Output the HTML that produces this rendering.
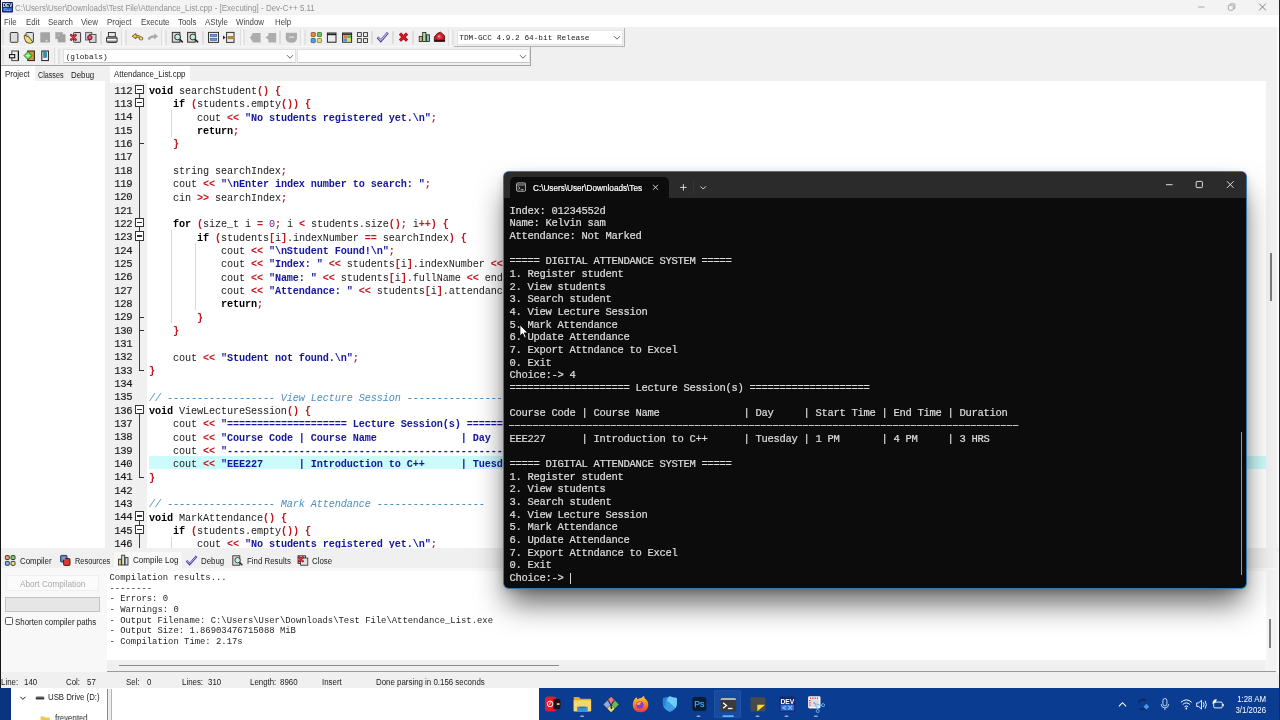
<!DOCTYPE html>
<html><head><meta charset="utf-8"><title>Dev-C++</title>
<style>
*{box-sizing:border-box;margin:0;padding:0}
html,body{width:1280px;height:720px;overflow:hidden;background:#fff}
body{position:relative;font-family:"Liberation Sans",sans-serif;font-size:8px;color:#000;line-height:1}
.abs{position:absolute}
#root{position:absolute;left:0;top:0;width:1280px;height:720px;will-change:transform}
.t{position:absolute;white-space:pre;line-height:10px;height:10px;transform-origin:0 0;transform:scaleX(.945)}
/* title + menu */
#title{left:0;top:0;width:1280px;height:14.5px;background:#f3f3f3}
#menu{left:0;top:14.5px;width:1280px;height:12.5px;background:#fff}
#tb{left:0;top:27px;width:1280px;height:39px;background:#f0f0f0}
#leftedge{left:0;top:15px;width:1.3px;height:705px;background:#1a1a1a}
.m{color:#444;font-size:8.35px;top:17.1px}
.sep{position:absolute;width:1px;background:#c9c9c9;transform:translateX(-0.5px)}
.combo{position:absolute;background:#fff;border:1px solid #dcdcdc;height:14px}
.mono{font-family:"Liberation Mono",monospace}
/* editor */
#edwrap{left:107px;top:66px;width:1173px;height:486px;background:#fff}
#gutter{left:110px;top:83px;width:37.2px;height:468px;background:#f0f0f0}
.ln{position:absolute;left:114.3px;font-family:"Liberation Mono",monospace;font-size:10.6px;letter-spacing:-0.36px;color:#1c1c1c;-webkit-text-stroke:0.18px #1c1c1c;white-space:pre;height:13.333px;line-height:13.333px}
.cl{position:absolute;left:149px;font-family:"Liberation Mono",monospace;font-size:10.2px;letter-spacing:-0.12px;color:#1a1a1a;white-space:pre;height:13.333px;line-height:13.333px}
.cl b{font-weight:bold}
.k{font-weight:bold;color:#000}
.s{font-weight:bold;color:#1515a0}
.o{font-weight:bold;color:#c0181f}
.n{color:#7a1a8a}
.c{font-style:italic;color:#4a8fc4}
.fb{position:absolute;left:135.2px;width:8.7px;height:9.4px;border:1.1px solid #333;background:#fff}
.fb i{position:absolute;left:0.7px;right:0.7px;top:3.05px;height:1.1px;background:#333}
.fv{position:absolute;left:139.1px;width:1.1px;background:#3c3c3c}
.fh{position:absolute;left:139.1px;width:4.6px;height:1.1px;background:#333}
.ig{position:absolute;width:1px;background:#d9d9d9}
/* terminal */
#term{left:504px;top:171.6px;width:741.7px;height:416.2px;background:#0c0c0c;border-radius:5px;box-shadow:0 0 0 1px #3876b4,0 18px 30px -3px rgba(0,0,0,.62),0 2px 8px rgba(0,0,0,.2);overflow:hidden}
#termbar{left:0;top:0;width:742px;height:26.2px;background:#2b2b2b}
#termtab{left:5.5px;top:5.6px;width:159.6px;height:20.7px;background:#0c0c0c;border-radius:5px 5px 0 0}
.tl{position:absolute;left:5.5px;font-family:"Liberation Mono",monospace;font-size:10.5px;letter-spacing:-0.3px;color:#dcdcdc;-webkit-text-stroke:0.22px #dcdcdc;white-space:pre;height:12.667px;line-height:12.667px}
/* bottom panel */
#bp{left:0;top:548.1px;width:1280px;height:126px;background:#f0f0f0}
#log{left:107.4px;top:571.4px;width:1158.2px;height:89px;background:#fff}
.lg{position:absolute;left:109.5px;font-family:"Liberation Mono",monospace;font-size:8.89px;color:#262626;white-space:pre;height:10.7px;line-height:10.7px}
#status{left:0;top:674px;width:1280px;height:14.5px;background:#f0f0f0}
.st{color:#222;font-size:8.35px;top:677px}
#strip{left:0;top:688.2px;width:1280px;height:31.8px;background:#fff}
#taskbar{left:539px;top:688.2px;width:741px;height:31.8px;background:#0a3c91}
</style></head><body><div id="root">
<!-- ===== IDE chrome ===== -->
<div class="abs" id="title"></div>
<div class="abs" id="menu"></div>
<div class="abs" id="tb"></div>
<!-- app icon -->
<svg class="abs" style="left:1.5px;top:2.3px" width="11" height="10.5" viewBox="0 0 11 10.5"><rect width="11" height="10.5" rx="1" fill="#0d1f5c"/><rect x="0.8" y="5.6" width="9.4" height="3.6" fill="#2a62c8"/><text x="5.5" y="4.9" font-family="Liberation Sans" font-weight="bold" font-size="4.6" fill="#fff" text-anchor="middle">DEV</text><text x="5.5" y="9" font-family="Liberation Sans" font-weight="bold" font-size="3.4" fill="#9fd0ff" text-anchor="middle">C++</text></svg>
<div class="t" id="ttl" style="left:15.3px;top:3.2px;font-size:8.5px;color:#929292;transform:scaleX(.935)">C:\Users\User\Downloads\Test File\Attendance_List.cpp - [Executing] - Dev-C++ 5.11</div>
<!-- window buttons -->
<svg class="abs" style="left:1190px;top:0" width="90" height="15" viewBox="0 0 90 15"><g stroke="#a0a0a0" stroke-width="0.9" fill="none"><path d="M8 7H14.5"/><rect x="38.3" y="5.2" width="5" height="5" rx="0.8"/><path d="M39.8 5.2V4.6Q39.8 3.8 40.6 3.8H44Q44.9 3.8 44.9 4.7V8Q44.9 8.8 44.1 8.8H43.4"/></g><path d="M69.1 3.6L75.9 10.4M75.9 3.6L69.1 10.4" stroke="#747474" stroke-width="0.9" fill="none"/></svg>
<!-- menu -->
<div class="t m" style="left:4.4px">File</div>
<div class="t m" style="left:25.9px">Edit</div>
<div class="t m" style="left:48.3px">Search</div>
<div class="t m" style="left:80.9px">View</div>
<div class="t m" style="left:107px">Project</div>
<div class="t m" style="left:140.6px">Execute</div>
<div class="t m" style="left:177.8px">Tools</div>
<div class="t m" style="left:204.8px">AStyle</div>
<div class="t m" style="left:236.2px">Window</div>
<div class="t m" style="left:274.8px">Help</div>
<!-- toolbar separators -->
<div class="abs" style="left:0;top:46.3px;width:626px;height:1px;background:#f8f8f8"></div>
<div class="abs" style="left:1px;top:64.8px;width:530px;height:1px;background:#a6a6a6"></div>
<div class="sep" style="left:3px;top:30px;height:15px;background:#d6d6d6"></div>
<div class="sep" style="left:100.5px;top:31px;height:13px"></div>
<div class="sep" style="left:122.3px;top:29px;height:17px;background:#d0d0d0"></div><div class="sep" style="left:123.3px;top:29px;height:17px;background:#fff"></div>
<div class="sep" style="left:126px;top:30px;height:15px;background:#d6d6d6"></div>
<div class="sep" style="left:162px;top:29px;height:17px;background:#d0d0d0"></div><div class="sep" style="left:163px;top:29px;height:17px;background:#fff"></div>
<div class="sep" style="left:165.7px;top:30px;height:15px;background:#d6d6d6"></div>
<div class="sep" style="left:202.5px;top:31px;height:13px"></div>
<div class="sep" style="left:240.5px;top:29px;height:17px;background:#d0d0d0"></div><div class="sep" style="left:241.5px;top:29px;height:17px;background:#fff"></div>
<div class="sep" style="left:244.3px;top:30px;height:15px;background:#d6d6d6"></div>
<div class="sep" style="left:280.3px;top:31px;height:13px"></div>
<div class="sep" style="left:301.2px;top:29px;height:17px;background:#d0d0d0"></div><div class="sep" style="left:302.2px;top:29px;height:17px;background:#fff"></div>
<div class="sep" style="left:305px;top:30px;height:15px;background:#d6d6d6"></div>
<div class="sep" style="left:371.5px;top:31px;height:13px"></div>
<div class="sep" style="left:392.5px;top:31px;height:13px"></div>
<div class="sep" style="left:413px;top:31px;height:13px"></div>
<div class="sep" style="left:449px;top:29px;height:17px;background:#d0d0d0"></div><div class="sep" style="left:450px;top:29px;height:17px;background:#fff"></div>
<div class="sep" style="left:452.8px;top:30px;height:15px;background:#d6d6d6"></div>
<div class="sep" style="left:3px;top:49px;height:15px;background:#d6d6d6"></div>
<div class="sep" style="left:55px;top:48px;height:17px;background:#d0d0d0"></div><div class="sep" style="left:56px;top:48px;height:17px;background:#fff"></div>
<div class="sep" style="left:59.3px;top:49px;height:15px;background:#d6d6d6"></div>
<!-- combos -->
<div class="combo" style="left:456.6px;top:30.4px;width:166.8px;height:14.4px;border-color:#e3e3e3"></div>
<div class="abs" style="left:453.5px;top:46px;width:171.6px;height:1px;background:#b4b4b4"></div>
<div class="abs" style="left:624.2px;top:28px;width:1px;height:19px;background:#b4b4b4"></div>
<div class="abs" style="left:530.2px;top:47.4px;width:1px;height:18.4px;background:#a6a6a6"></div>
<div class="t mono" style="transform:none;left:459.3px;top:32.8px;font-size:7.75px;color:#222">TDM-GCC 4.9.2 64-bit Release</div>
<svg class="abs" style="left:613px;top:35px" width="8" height="6" viewBox="0 0 8 6"><path d="M1 1.2L4 4.2L7 1.2" stroke="#555" stroke-width="0.9" fill="none"/></svg>
<div class="combo" style="left:62.8px;top:49px;width:233.4px;height:14.4px;border-color:#e0e0e0;border-bottom-color:#c4c4c4"></div>
<div class="t mono" style="transform:none;left:65.7px;top:51.5px;font-size:7.75px;color:#222">(globals)</div>
<svg class="abs" style="left:286px;top:54px" width="8" height="6" viewBox="0 0 8 6"><path d="M1 1.2L4 4.2L7 1.2" stroke="#555" stroke-width="0.9" fill="none"/></svg>
<div class="combo" style="left:297px;top:49px;width:233.2px;height:14.4px;border-color:#e0e0e0;border-bottom-color:#c4c4c4"></div>
<svg class="abs" style="left:519px;top:54px" width="8" height="6" viewBox="0 0 8 6"><path d="M1 1.2L4 4.2L7 1.2" stroke="#555" stroke-width="0.9" fill="none"/></svg>
<!-- toolbar icons -->
<svg class="abs" style="left:0;top:27px" width="460" height="39" viewBox="0 27 460 39">
<!-- row 1 -->
<!-- new -->
<rect x="10.3" y="32.5" width="7.6" height="9.8" rx="0.8" fill="#dedede" stroke="#3a3a3a" stroke-width="1"/>
<!-- open -->
<rect x="26" y="32.5" width="7.4" height="9.8" rx="0.8" fill="#e2e2e2" stroke="#3a3a3a" stroke-width="1"/><path d="M24.3 35Q29.4 35.8 33 42.3Q30.6 43.8 28 43Q24 41.2 24.3 35Z" fill="#f0dc7c" stroke="#4a3c10" stroke-width="0.8"/><path d="M27.4 34.4L32 41.4" stroke="#6a6a6a" stroke-width="0.6"/>
<!-- save gray -->
<rect x="40.3" y="32.2" width="9.7" height="10.2" rx="0.6" fill="#a3a3a3"/><rect x="45.8" y="39.8" width="1.5" height="1.5" fill="#efefef"/>
<!-- save all gray -->
<rect x="55.3" y="32.2" width="7.5" height="6.9" fill="#a8a8a8"/><rect x="57.8" y="34.3" width="7.7" height="8.1" fill="#a2a2a2"/><rect x="58.4" y="35" width="1" height="1" fill="#e8e8e8"/>
<!-- close -->
<rect x="73.6" y="32.5" width="7" height="9.8" rx="0.6" fill="#dcdcdc" stroke="#3a3a3a" stroke-width="1"/><path d="M71.2 35.2L75.6 39.6M75.6 35.2L71.2 39.6" stroke="#8c1424" stroke-width="2.5" stroke-linecap="round"/><path d="M71.5 35.5L75.3 39.3M75.3 35.5L71.5 39.3" stroke="#dc4054" stroke-width="1.3" stroke-linecap="round"/>
<!-- close all -->
<rect x="85.6" y="32.4" width="6.2" height="7.6" fill="#cfcfcf" stroke="#555" stroke-width="0.9"/><rect x="89.6" y="34.4" width="6.4" height="8" fill="#d4d4d4" stroke="#444" stroke-width="0.9"/><circle cx="89.8" cy="37.5" r="2.6" fill="#9a1430"/><circle cx="89.8" cy="37.5" r="1.2" fill="#e8788a"/>
<!-- print -->
<rect x="108.4" y="32.5" width="6.9" height="4.4" fill="#e6e6e6" stroke="#2a2a2a" stroke-width="0.9"/><rect x="106.5" y="37" width="10.6" height="5.5" rx="1" fill="#fafafa" stroke="#262626" stroke-width="0.9"/><path d="M106.6 38.2H117" stroke="#262626" stroke-width="0.9"/><path d="M106.8 41.2H116.8" stroke="#262626" stroke-width="0.8"/>
<!-- undo -->
<path d="M132.2 36.2L136 33.6V35.3Q139 35.1 140.6 36.6Q143.4 37.4 142.8 39.2Q141.6 40.6 139.6 39.6Q138.6 38.6 139.8 37.8Q138.4 37 136 37.2V38.8Z" fill="#f2cc4e" stroke="#5e430a" stroke-width="0.8" stroke-linejoin="round"/><circle cx="141" cy="38.6" r="0.8" fill="#f0f0f0"/>
<!-- redo gray -->
<path d="M158 36.2L154.2 33.4V35.2Q150 35.2 147.6 38.2L149 40.2Q151.4 37.6 154.2 37.8V39.4Z" fill="#a9a9a9"/>
<!-- find -->
<rect x="172.3" y="32.4" width="7.6" height="9.8" fill="#d6d6d6" stroke="#333" stroke-width="1"/><circle cx="177.6" cy="37" r="2.9" fill="#bfe9e6" stroke="#222" stroke-width="0.9"/><path d="M179.8 39.4L182.8 42.4" stroke="#222" stroke-width="1.5"/>
<!-- replace -->
<rect x="187.6" y="32.4" width="7.6" height="9.8" fill="#d6d6d6" stroke="#333" stroke-width="1"/><circle cx="192.9" cy="37" r="2.9" fill="#c4ecd0" stroke="#222" stroke-width="0.9"/><path d="M195.1 39.4L198.1 42.4" stroke="#222" stroke-width="1.5"/>
<!-- list -->
<rect x="208.5" y="32.4" width="10" height="10" fill="#e8ecf6" stroke="#333" stroke-width="1"/><rect x="210.2" y="34.3" width="6.6" height="2.3" fill="#6f95d8" stroke="#2d477d" stroke-width="0.5"/><rect x="210.2" y="38.2" width="6.6" height="2.3" fill="#6f95d8" stroke="#2d477d" stroke-width="0.5"/>
<!-- goto -->
<rect x="226.6" y="32.4" width="7.4" height="10" fill="#ececec" stroke="#333" stroke-width="1"/><rect x="227.6" y="36" width="6" height="3.2" fill="#b08a3c"/><path d="M223 35.6L225.6 37.6L223 39.6Z" fill="#222"/>
<!-- gray arrows -->
<path d="M250 37.6L253 33H260.6V42.4H253Z" fill="#adadad"/>
<path d="M265.4 37.4L268.4 35.2V33H276.2V42.4H268.4V39.6Z" fill="#adadad"/>
<path d="M285.8 32.8H297V38Q297 42.6 291.4 42.8Q285.8 42.6 285.8 38Z" fill="#acacac"/><path d="M289 37.2H294" stroke="#e4e4e4" stroke-width="1.2"/>
<!-- 4 color squares -->
<rect x="311.2" y="32.5" width="4.1" height="4.1" rx="0.6" fill="#e9873a" stroke="#7a3f12" stroke-width="0.7"/><rect x="317.4" y="32.5" width="4.1" height="4.1" rx="0.6" fill="#6fbf5c" stroke="#2c6622" stroke-width="0.7"/><rect x="311.2" y="38.5" width="4.1" height="4.1" rx="0.6" fill="#4aa3e0" stroke="#1c4d78" stroke-width="0.7"/><rect x="317.4" y="38.5" width="4.1" height="4.1" rx="0.6" fill="#e6dc6a" stroke="#77702a" stroke-width="0.7"/>
<!-- window -->
<rect x="327.4" y="33" width="8.6" height="9.2" fill="#ececec" stroke="#222" stroke-width="1"/><path d="M327.4 34.4H336" stroke="#222" stroke-width="1.6"/>
<!-- colored window -->
<rect x="342.6" y="33" width="9" height="9.2" fill="#f0f0f0" stroke="#222" stroke-width="1"/><path d="M342.6 34.2H351.6" stroke="#222" stroke-width="1.4"/><rect x="343.4" y="35.2" width="3.6" height="3.2" fill="#e8762c"/><rect x="347.2" y="35.2" width="3.8" height="3.2" fill="#5cb850"/><rect x="343.4" y="38.5" width="3.6" height="3" fill="#3f9be0"/><rect x="347.2" y="38.5" width="3.8" height="3" fill="#e8d84a"/>
<!-- 4 outline squares -->
<g fill="#ededed" stroke="#333" stroke-width="0.9"><rect x="357.4" y="32.6" width="3.9" height="3.9"/><rect x="363.6" y="32.6" width="3.9" height="3.9"/><rect x="357.4" y="38.6" width="3.9" height="3.9"/><rect x="363.6" y="38.6" width="3.9" height="3.9"/></g>
<!-- check -->
<path d="M377.6 37.4L380.8 40.8L387.8 32.8" stroke="#3f3494" stroke-width="2.5" fill="none"/><path d="M378 37.6L380.8 40.4L387.4 33.1" stroke="#c4bcf4" stroke-width="1.2" fill="none"/>
<!-- red X -->
<path d="M400 33.6L407 40.6M407 33.6L400 40.6" stroke="#7a0a12" stroke-width="3.1"/><path d="M400 33.6L407 40.6M407 33.6L400 40.6" stroke="#e01622" stroke-width="2.1"/>
<!-- bar chart -->
<g stroke="#1e1e1e" stroke-width="0.8"><rect x="419.2" y="36.4" width="3" height="5" fill="#f0b07c"/><rect x="422.7" y="32.4" width="3.2" height="9" fill="#a4e090"/><rect x="426.4" y="34.8" width="3" height="6.6" fill="#78c4b4"/></g>
<!-- red debug -->
<path d="M434.4 41.4V36.8L437.6 33.2L440.6 32.2L444.6 35.8V41.4Z" fill="#d01a22" stroke="#3a0a0c" stroke-width="0.8"/><path d="M434.4 40.6H444.8" stroke="#2a1414" stroke-width="1.6"/><circle cx="439.4" cy="36.8" r="2.4" fill="#e84048"/><circle cx="439" cy="36.4" r="0.8" fill="#f8b0b0"/>
<!-- row 2 -->
<rect x="11.8" y="51" width="6.6" height="9.6" fill="#ececec" stroke="#4a4a4a" stroke-width="1"/><path d="M18.4 51V60.6" stroke="#111" stroke-width="1.1"/><rect x="9.5" y="54.6" width="5.2" height="3.2" fill="#eef0fa" stroke="#14141e" stroke-width="1.1"/>
<rect x="27.8" y="51" width="6.6" height="9.6" fill="#c9983e" stroke="#2e220c" stroke-width="1"/><path d="M24 55.6L28 51.6L32 55.6L28 59.6Z" fill="#5fe05a" stroke="#1a5a16" stroke-width="0.8"/><path d="M28 53.4V57.8M25.8 55.6H30.2" stroke="#b8ffb0" stroke-width="1.1"/>
<rect x="41.8" y="51" width="6.6" height="9.6" fill="#f4f4f4" stroke="#1e1e1e" stroke-width="1"/><rect x="43.7" y="51.8" width="2.8" height="5.6" fill="#2594bc" stroke="#155a78" stroke-width="0.5"/>
</svg>
<!-- ===== editor ===== -->
<div class="abs" id="edwrap"></div>
<div class="abs" id="gutter"></div>
<div class="abs" style="left:149px;top:456.03px;width:1117px;height:13.33px;background:#ccfbfb"></div>
<div class="ig" style="left:170.8px;top:110.07px;height:13.33px"></div>
<div class="ig" style="left:170.8px;top:123.40px;height:13.33px"></div>
<div class="ig" style="left:170.8px;top:230.07px;height:13.33px"></div>
<div class="ig" style="left:170.8px;top:243.40px;height:13.33px"></div>
<div class="ig" style="left:194.8px;top:243.40px;height:13.33px"></div>
<div class="ig" style="left:170.8px;top:256.73px;height:13.33px"></div>
<div class="ig" style="left:194.8px;top:256.73px;height:13.33px"></div>
<div class="ig" style="left:170.8px;top:270.07px;height:13.33px"></div>
<div class="ig" style="left:194.8px;top:270.07px;height:13.33px"></div>
<div class="ig" style="left:170.8px;top:283.40px;height:13.33px"></div>
<div class="ig" style="left:194.8px;top:283.40px;height:13.33px"></div>
<div class="ig" style="left:170.8px;top:296.73px;height:13.33px"></div>
<div class="ig" style="left:194.8px;top:296.73px;height:13.33px"></div>
<div class="ig" style="left:170.8px;top:310.07px;height:13.33px"></div>
<div class="ig" style="left:170.8px;top:536.73px;height:13.33px"></div>
<div class="ln" style="top:84.80px">112</div>
<div class="cl" style="top:85.00px"><span class="k">void</span> searchStudent<span class="o">(</span><span class="o">)</span> <span class="o">{</span></div>
<div class="ln" style="top:98.13px">113</div>
<div class="cl" style="top:98.33px">    <span class="k">if</span> <span class="o">(</span>students.empty<span class="o">(</span><span class="o">)</span><span class="o">)</span> <span class="o">{</span></div>
<div class="ln" style="top:111.47px">114</div>
<div class="cl" style="top:111.67px">        cout <span class="o">&lt;</span><span class="o">&lt;</span> <span class="s">"No students registered yet.\n"</span><span class="o">;</span></div>
<div class="ln" style="top:124.80px">115</div>
<div class="cl" style="top:125.00px">        <span class="k">return</span><span class="o">;</span></div>
<div class="ln" style="top:138.13px">116</div>
<div class="cl" style="top:138.33px">    <span class="o">}</span></div>
<div class="ln" style="top:151.47px">117</div>
<div class="ln" style="top:164.80px">118</div>
<div class="cl" style="top:165.00px">    string searchIndex<span class="o">;</span></div>
<div class="ln" style="top:178.13px">119</div>
<div class="cl" style="top:178.33px">    cout <span class="o">&lt;</span><span class="o">&lt;</span> <span class="s">"\nEnter index number to search: "</span><span class="o">;</span></div>
<div class="ln" style="top:191.47px">120</div>
<div class="cl" style="top:191.67px">    cin <span class="o">&gt;</span><span class="o">&gt;</span> searchIndex<span class="o">;</span></div>
<div class="ln" style="top:204.80px">121</div>
<div class="ln" style="top:218.13px">122</div>
<div class="cl" style="top:218.33px">    <span class="k">for</span> <span class="o">(</span>size_t i <span class="o">=</span> <span class="n">0</span><span class="o">;</span> i <span class="o">&lt;</span> students.size<span class="o">(</span><span class="o">)</span><span class="o">;</span> i<span class="o">+</span><span class="o">+</span><span class="o">)</span> <span class="o">{</span></div>
<div class="ln" style="top:231.47px">123</div>
<div class="cl" style="top:231.67px">        <span class="k">if</span> <span class="o">(</span>students<span class="o">[</span>i<span class="o">]</span>.indexNumber <span class="o">=</span><span class="o">=</span> searchIndex<span class="o">)</span> <span class="o">{</span></div>
<div class="ln" style="top:244.80px">124</div>
<div class="cl" style="top:245.00px">            cout <span class="o">&lt;</span><span class="o">&lt;</span> <span class="s">"\nStudent Found!\n"</span><span class="o">;</span></div>
<div class="ln" style="top:258.13px">125</div>
<div class="cl" style="top:258.33px">            cout <span class="o">&lt;</span><span class="o">&lt;</span> <span class="s">"Index: "</span> <span class="o">&lt;</span><span class="o">&lt;</span> students<span class="o">[</span>i<span class="o">]</span>.indexNumber <span class="o">&lt;</span><span class="o">&lt;</span> endl<span class="o">;</span></div>
<div class="ln" style="top:271.47px">126</div>
<div class="cl" style="top:271.67px">            cout <span class="o">&lt;</span><span class="o">&lt;</span> <span class="s">"Name: "</span> <span class="o">&lt;</span><span class="o">&lt;</span> students<span class="o">[</span>i<span class="o">]</span>.fullName <span class="o">&lt;</span><span class="o">&lt;</span> endl<span class="o">;</span></div>
<div class="ln" style="top:284.80px">127</div>
<div class="cl" style="top:285.00px">            cout <span class="o">&lt;</span><span class="o">&lt;</span> <span class="s">"Attendance: "</span> <span class="o">&lt;</span><span class="o">&lt;</span> students<span class="o">[</span>i<span class="o">]</span>.attendance <span class="o">&lt;</span><span class="o">&lt;</span> endl<span class="o">;</span></div>
<div class="ln" style="top:298.13px">128</div>
<div class="cl" style="top:298.33px">            <span class="k">return</span><span class="o">;</span></div>
<div class="ln" style="top:311.47px">129</div>
<div class="cl" style="top:311.67px">        <span class="o">}</span></div>
<div class="ln" style="top:324.80px">130</div>
<div class="cl" style="top:325.00px">    <span class="o">}</span></div>
<div class="ln" style="top:338.13px">131</div>
<div class="ln" style="top:351.47px">132</div>
<div class="cl" style="top:351.67px">    cout <span class="o">&lt;</span><span class="o">&lt;</span> <span class="s">"Student not found.\n"</span><span class="o">;</span></div>
<div class="ln" style="top:364.80px">133</div>
<div class="cl" style="top:365.00px"><span class="o">}</span></div>
<div class="ln" style="top:378.13px">134</div>
<div class="ln" style="top:391.47px">135</div>
<div class="cl" style="top:391.67px"><span class="c">// ------------------ View Lecture Session ------------------------------------</span></div>
<div class="ln" style="top:404.80px">136</div>
<div class="cl" style="top:405.00px"><span class="k">void</span> ViewLectureSession<span class="o">(</span><span class="o">)</span> <span class="o">{</span></div>
<div class="ln" style="top:418.13px">137</div>
<div class="cl" style="top:418.33px">    cout <span class="o">&lt;</span><span class="o">&lt;</span> <span class="s">"==================== Lecture Session(s) ====================\n"</span><span class="o">;</span></div>
<div class="ln" style="top:431.47px">138</div>
<div class="cl" style="top:431.67px">    cout <span class="o">&lt;</span><span class="o">&lt;</span> <span class="s">"Course Code | Course Name              | Day     | Start Time | End Time | Duration\n"</span><span class="o">;</span></div>
<div class="ln" style="top:444.80px">139</div>
<div class="cl" style="top:445.00px">    cout <span class="o">&lt;</span><span class="o">&lt;</span> <span class="s">"-------------------------------------------------------------------------------------\n"</span><span class="o">;</span></div>
<div class="ln" style="top:458.13px">140</div>
<div class="cl" style="top:458.33px">    cout <span class="o">&lt;</span><span class="o">&lt;</span> <span class="s">"EEE227      | Introduction to C++      | Tuesday | 1 PM       | 4 PM     | 3 HRS\n"</span><span class="o">;</span></div>
<div class="ln" style="top:471.47px">141</div>
<div class="cl" style="top:471.67px"><span class="o">}</span></div>
<div class="ln" style="top:484.80px">142</div>
<div class="ln" style="top:498.13px">143</div>
<div class="cl" style="top:498.33px"><span class="c">// ------------------ Mark Attendance ------------------</span></div>
<div class="ln" style="top:511.47px">144</div>
<div class="cl" style="top:511.67px"><span class="k">void</span> MarkAttendance<span class="o">(</span><span class="o">)</span> <span class="o">{</span></div>
<div class="ln" style="top:524.80px">145</div>
<div class="cl" style="top:525.00px">    <span class="k">if</span> <span class="o">(</span>students.empty<span class="o">(</span><span class="o">)</span><span class="o">)</span> <span class="o">{</span></div>
<div class="ln" style="top:538.13px">146</div>
<div class="cl" style="top:538.33px">        cout <span class="o">&lt;</span><span class="o">&lt;</span> <span class="s">"No students registered yet.\n"</span><span class="o">;</span></div>
<div class="fv" style="top:89.40px;height:281.20px"></div>
<div class="fv" style="top:409.40px;height:67.87px"></div>
<div class="fv" style="top:516.07px;height:42.00px"></div>
<div class="fh" style="top:143.33px"></div>
<div class="fh" style="top:316.67px"></div>
<div class="fh" style="top:330.00px"></div>
<div class="fh" style="top:370.00px"></div>
<div class="fh" style="top:476.67px"></div>
<div class="fb" style="top:84.70px"><i></i></div>
<div class="fb" style="top:98.03px"><i></i></div>
<div class="fb" style="top:218.03px"><i></i></div>
<div class="fb" style="top:231.37px"><i></i></div>
<div class="fb" style="top:404.70px"><i></i></div>
<div class="fb" style="top:511.37px"><i></i></div>
<div class="fb" style="top:524.70px"><i></i></div>
<!-- ===== left panel & tabs ===== -->
<div class="abs" style="left:1.3px;top:66px;width:103.5px;height:486px;background:#fff"></div>
<div class="abs" style="left:34.5px;top:66px;width:70.3px;height:15.3px;background:#f0f0f0"></div>
<div class="abs" style="left:104.8px;top:66px;width:5.2px;height:486px;background:#f0f0f0"></div>
<div class="t" style="left:5px;top:68.7px;font-size:8.35px;color:#222">Project</div>
<div class="t" style="left:38.2px;top:70.1px;font-size:8.35px;color:#222;transform:scaleX(.86)">Classes</div>
<div class="t" style="left:71.2px;top:70.1px;font-size:8.35px;color:#222">Debug</div>
<!-- editor tab strip -->
<div class="abs" style="left:110px;top:66px;width:1170px;height:15px;background:#f0f0f0"></div>
<div class="abs" style="left:110px;top:66px;width:80px;height:17px;background:#fff"></div>
<div class="t" style="left:114.4px;top:68.9px;font-size:8.35px;color:#222">Attendance_List.cpp</div>
<!-- editor v-scrollbar -->
<div class="abs" style="left:1266px;top:81px;width:10.5px;height:467px;background:#f1f1f1"></div>
<div class="abs" style="left:1270.4px;top:253px;width:1.5px;height:48px;background:#7c7c7c"></div>
<div class="abs" style="left:1276.5px;top:27px;width:3.5px;height:525px;background:#fbfbfb"></div>
<!-- ===== bottom panel ===== -->
<div class="abs" id="bp"></div>
<div class="abs" style="left:1.3px;top:567.8px;width:1275.2px;height:104.6px;background:#f8f8f8"></div>
<div class="abs" style="left:113.7px;top:552.2px;width:68.8px;height:16px;background:#f8f8f8"></div>
<div class="abs" id="log"></div>
<div class="abs" style="left:1267px;top:570px;width:9.5px;height:102px;background:#f3f3f3"></div>
<div class="abs" style="left:1269.2px;top:619px;width:1.4px;height:29px;background:#808080"></div>
<div class="abs" style="left:1276.5px;top:552px;width:3.5px;height:136px;background:#fafafa"></div>
<div class="abs" style="left:107.4px;top:660.4px;width:1158.2px;height:11px;background:#f0f0f0"></div>
<div class="abs" style="left:119px;top:665.3px;width:440px;height:1.2px;background:#8c8c8c"></div>
<div class="abs" style="left:107px;top:671.4px;width:1169px;height:1px;background:#9a9a9a"></div>
<!-- bottom tabs icons -->
<svg class="abs" style="left:0;top:553px" width="340" height="17" viewBox="0 553 340 17">
<g stroke="#2a2a2a" stroke-width="0.9"><rect x="5.4" y="555.6" width="3.9" height="3.9" rx="0.7" fill="#f0a060"/><rect x="11.1" y="555.6" width="3.9" height="3.9" rx="0.7" fill="#84d070"/><rect x="5.4" y="561.4" width="3.9" height="3.9" rx="0.7" fill="#7ab4e8"/><rect x="11.1" y="561.4" width="3.9" height="3.9" rx="0.7" fill="#f0e870"/></g>
<rect x="60.6" y="555.4" width="6.4" height="6.6" rx="0.8" fill="#5f84c4" stroke="#1e2a4a" stroke-width="0.9"/><rect x="63.6" y="558.6" width="6.4" height="6.8" rx="0.8" fill="#dc3a2e" stroke="#3a1210" stroke-width="0.9"/><rect x="62.6" y="557.2" width="2.6" height="2.6" fill="#9ab8e8" opacity=".7"/>
<g stroke="#2a2a2a" stroke-width="0.85"><rect x="118.4" y="559.2" width="2.9" height="5.8" fill="#e8c48c"/><rect x="121.7" y="555.2" width="3" height="9.8" fill="#cfe8c4"/><rect x="125.1" y="557.6" width="2.9" height="7.4" fill="#c4dfe8"/></g>
<path d="M186.6 560.8L189.6 564.2L196.6 556.2" stroke="#463a9c" stroke-width="2.2" fill="none"/><path d="M187 561L189.6 563.8L196.2 556.5" stroke="#bdb4f2" stroke-width="1" fill="none"/>
<rect x="232.8" y="555.8" width="7" height="9.4" fill="#dadada" stroke="#333" stroke-width="0.9"/><circle cx="237.6" cy="560.2" r="2.7" fill="#cfeeea" stroke="#222" stroke-width="0.8"/><path d="M239.6 562.4L242.4 565.2" stroke="#222" stroke-width="1.4"/>
<rect x="298" y="555.8" width="7.6" height="7.6" fill="#c9c9c9" stroke="#222" stroke-width="0.8"/><rect x="300.6" y="558" width="7.2" height="7.2" fill="#e0e0e0" stroke="#222" stroke-width="0.8"/><path d="M299 557.4L302.8 561.2M302.8 557.4L299 561.2" stroke="#8c1424" stroke-width="2.3" stroke-linecap="round"/><path d="M299.3 557.7L302.5 560.9M302.5 557.7L299.3 560.9" stroke="#dc4054" stroke-width="1.1" stroke-linecap="round"/>
</svg>
<div class="t" style="left:19.6px;top:556.4px;font-size:8.35px;color:#222">Compiler</div>
<div class="t" style="left:74.8px;top:556.4px;font-size:8.35px;color:#222;transform:scaleX(.885)">Resources</div>
<div class="t" style="left:132.5px;top:555.4px;font-size:8.35px;color:#222;transform:scaleX(.97)">Compile Log</div>
<div class="t" style="left:200.8px;top:556.4px;font-size:8.35px;color:#222">Debug</div>
<div class="t" style="left:247px;top:556.4px;font-size:8.35px;color:#222">Find Results</div>
<div class="t" style="left:312px;top:556.4px;font-size:8.35px;color:#222">Close</div>
<!-- left controls -->
<div class="abs" style="left:6px;top:575.4px;width:93px;height:15.2px;background:#fbfbfb;border:1px solid #efefef"></div>
<div class="t" style="left:20.3px;top:578.7px;font-size:8.35px;color:#a9a9a9;transform:scaleX(.985)">Abort Compilation</div>
<div class="abs" style="left:5.3px;top:597px;width:95.2px;height:15px;background:#e6e6e6;border:1px solid #c2c2c2"></div>
<div class="abs" style="left:5px;top:617.4px;width:8px;height:8px;background:#fff;border:1px solid #5a5a5a;border-radius:1.5px"></div>
<div class="t" style="left:15.4px;top:617.1px;font-size:8.35px;color:#222">Shorten compiler paths</div>
<!-- log text -->
<div class="lg" style="top:573.0px">Compilation results...</div>
<div class="lg" style="top:583.7px">--------</div>
<div class="lg" style="top:594.3px">- Errors: 0</div>
<div class="lg" style="top:605.0px">- Warnings: 0</div>
<div class="lg" style="top:615.7px">- Output Filename: C:\Users\User\Downloads\Test File\Attendance_List.exe</div>
<div class="lg" style="top:626.3px">- Output Size: 1.86903476715088 MiB</div>
<div class="lg" style="top:637.0px">- Compilation Time: 2.17s</div>
<!-- ===== status bar ===== -->
<div class="abs" id="status"></div>
<div class="t st" style="left:1.2px">Line:</div><div class="t st" style="left:24.4px">140</div>
<div class="t st" style="left:65.8px">Col:</div><div class="t st" style="left:87.4px">57</div>
<div class="t st" style="left:126px">Sel:</div><div class="t st" style="left:147.4px">0</div>
<div class="t st" style="left:181.6px">Lines:</div><div class="t st" style="left:207.7px">310</div>
<div class="t st" style="left:249.6px">Length:</div><div class="t st" style="left:280.4px">8960</div>
<div class="t st" style="left:322.4px">Insert</div>
<div class="t st" style="left:375.6px">Done parsing in 0.156 seconds</div>
<div class="abs" style="left:0;top:0;width:1px;height:688.2px;background:#161616"></div>
<!-- ===== bottom strip (explorer peek) ===== -->
<div class="abs" id="strip"></div>
<div class="abs" style="left:0;top:688.2px;width:11.2px;height:31.8px;background:#0b347e"></div>
<div class="abs" style="left:106.6px;top:688.5px;width:1px;height:31.5px;background:#8a8a8a"></div>
<div class="abs" style="left:107.6px;top:688.5px;width:3.6px;height:31.5px;background:#ececec"></div>
<div class="abs" style="left:111.2px;top:688.5px;width:1px;height:31.5px;background:#b5b5b5"></div>
<svg class="abs" style="left:18px;top:692px" width="40" height="28" viewBox="18 692 40 28">
<path d="M20.4 696.8L22.9 699.4L25.4 696.8" stroke="#222" stroke-width="1" fill="none"/>
<rect x="35.8" y="697" width="8.4" height="2.6" rx="0.6" fill="#3a3a3a"/><rect x="36.4" y="696.2" width="7.2" height="1.2" fill="#9a9a9a"/>
<path d="M40.6 716.6H44L45 717.6H49.8V720H40.6Z" fill="#f2c84a"/>
</svg>
<div class="t" style="left:48px;top:693.1px;font-size:8.25px;color:#222">USB Drive (D:)</div>
<div class="t" style="left:55px;top:714.3px;font-size:8.25px;color:#222">frevented</div>
<!-- ===== terminal ===== -->
<div class="abs" id="term">
<div class="abs" id="termbar"></div>
<div class="abs" id="termtab"></div>
<svg class="abs" style="left:11.6px;top:10.7px" width="10.2" height="10.2" viewBox="0 0 11 11"><rect x="0.6" y="1" width="9.8" height="9" rx="1.4" fill="#1a1a1a" stroke="#d0d0d0" stroke-width="0.9"/><path d="M0.8 3.2H10.2" stroke="#d0d0d0" stroke-width="0.8"/><path d="M2.4 5L4.2 6.5L2.4 8" stroke="#e8e8e8" stroke-width="0.8" fill="none"/><path d="M5.2 8.2H8" stroke="#e8e8e8" stroke-width="0.8"/></svg>
<div class="t" style="left:28.6px;top:11.3px;font-size:8.35px;color:#fff;-webkit-text-stroke:0.2px #fff;transform:scaleX(.98)">C:\Users\User\Downloads\Tes</div>
<svg class="abs" style="left:140px;top:4.3px" width="70" height="23" viewBox="0 0 70 23"><g stroke="#e6e6e6" stroke-width="0.9" fill="none"><path d="M9 8.8L14 13.8M14 8.8L9 13.8"/><path d="M36.2 11.4H42.6M39.4 8.2V14.6"/><path d="M56.6 10.4L59.2 13L61.8 10.4"/></g><path d="M49.6 5.5V17.5" stroke="#3c3c3c" stroke-width="0.8"/></svg>
<svg class="abs" style="left:655px;top:5.2px" width="80" height="16" viewBox="0 0 80 16"><g stroke="#f0f0f0" stroke-width="0.9" fill="none"><path d="M7 7.7H13.6"/><rect x="37.2" y="4.4" width="6.2" height="6.2" rx="0.8"/><path d="M68 4.3L74.6 10.9M74.6 4.3L68 10.9"/></g></svg>
<div class="tl" style="top:33.20px">Index: 01234552d</div>
<div class="tl" style="top:45.87px">Name: Kelvin sam</div>
<div class="tl" style="top:58.53px">Attendance: Not Marked</div>
<div class="tl" style="top:83.87px">===== DIGITAL ATTENDANCE SYSTEM =====</div>
<div class="tl" style="top:96.53px">1. Register student</div>
<div class="tl" style="top:109.20px">2. View students</div>
<div class="tl" style="top:121.87px">3. Search student</div>
<div class="tl" style="top:134.53px">4. View Lecture Session</div>
<div class="tl" style="top:147.20px">5. Mark Attendance</div>
<div class="tl" style="top:159.87px">6. Update Attendance</div>
<div class="tl" style="top:172.53px">7. Export Attndance to Excel</div>
<div class="tl" style="top:185.20px">0. Exit</div>
<div class="tl" style="top:197.87px">Choice:-&gt; 4</div>
<div class="tl" style="top:210.53px">==================== Lecture Session(s) ====================</div>
<div class="tl" style="top:235.87px">Course Code | Course Name              | Day     | Start Time | End Time | Duration</div>
<div class="abs" style="left:5.4px;top:253.43px;width:509.4px;height:1.1px;background:repeating-linear-gradient(90deg,#c4c4c4 0,#c4c4c4 4.9px,#555 4.9px,#555 6px)"></div>
<div class="tl" style="top:261.20px">EEE227      | Introduction to C++      | Tuesday | 1 PM       | 4 PM     | 3 HRS</div>
<div class="tl" style="top:286.53px">===== DIGITAL ATTENDANCE SYSTEM =====</div>
<div class="tl" style="top:299.20px">1. Register student</div>
<div class="tl" style="top:311.87px">2. View students</div>
<div class="tl" style="top:324.53px">3. Search student</div>
<div class="tl" style="top:337.20px">4. View Lecture Session</div>
<div class="tl" style="top:349.87px">5. Mark Attendance</div>
<div class="tl" style="top:362.53px">6. Update Attendance</div>
<div class="tl" style="top:375.20px">7. Export Attndance to Excel</div>
<div class="tl" style="top:387.87px">0. Exit</div>
<div class="tl" style="top:400.53px">Choice:-&gt; </div>
<div class="abs" style="left:65.6px;top:401.33px;width:1px;height:11.4px;background:#d8d8d8"></div>
<div class="abs" style="left:737.3px;top:260.7px;width:1.2px;height:143px;background:#9a9a9a"></div>
</div>
<svg class="abs" style="left:519px;top:324.2px" width="9.8" height="14.7" viewBox="0 0 10 15"><path d="M1 0.8V12.2L3.7 9.7L5.6 14L7.3 13.2L5.4 9.1H9Z" fill="#fff" stroke="#000" stroke-width="0.8" stroke-linejoin="round"/></svg>
<!-- ===== taskbar ===== -->
<div class="abs" id="taskbar"></div>
<div class="abs" style="left:714.3px;top:690.3px;width:26.4px;height:27.6px;border-radius:3px;background:#164a9e;box-shadow:inset 0 0 0 0.6px #2a5aa8"></div>
<svg class="abs" style="left:539.5px;top:688.5px" width="740.5" height="31.5" viewBox="539.5 688.5 740.5 31.5">
<!-- red app -->
<rect x="544.4" y="696" width="11.6" height="15" rx="3" fill="#dc1e2e"/><path d="M553 698.4H558.4Q560 698.4 560 700V707Q560 708.8 558.4 708.8H553Z" fill="#24100f"/><circle cx="549.6" cy="703.4" r="2.8" fill="none" stroke="#fff" stroke-width="0.9"/><path d="M548.4 704.8Q549.6 701.4 551 702.2" stroke="#fff" stroke-width="0.7" fill="none"/><rect x="556.4" y="702.8" width="2.6" height="1.5" fill="#f0f0f0"/>
<!-- folder -->
<path d="M573.2 697.4Q573.2 696.6 574 696.6H578.6L580 698.2H589.8Q590.6 698.2 590.6 699V710.4H573.2Z" fill="#e8a52c"/><path d="M573.2 699.8H590.6V710.2Q590.6 711 589.8 711H574Q573.2 711 573.2 710.2Z" fill="#fad767"/><path d="M576.6 706.2H587.2V711H576.6Z" fill="#3a93dc"/><path d="M578.6 706.2H585.2V708H578.6Z" fill="#2a78c0"/>
<!-- diamond -->
<g transform="rotate(45 610.6 704)"><rect x="604.4" y="697.8" width="12.4" height="12.4" rx="1.4" fill="#2a3550"/><rect x="605.2" y="698.6" width="5.2" height="5.2" fill="#e8788c"/><rect x="610.8" y="698.6" width="5.2" height="5.2" fill="#5cc25c"/><rect x="605.2" y="704.2" width="5.2" height="5.2" fill="#8caae8"/><rect x="610.8" y="704.2" width="5.2" height="5.2" fill="#e8e274"/></g><path d="M608 699.6L611.2 706.8M613 700L610 706.8" stroke="#1e2230" stroke-width="0.9"/><circle cx="611" cy="707.6" r="1" fill="#1e2230"/>
<!-- firefox -->
<defs><linearGradient id="ffg" x1="0" y1="0" x2="0" y2="1"><stop offset="0" stop-color="#ffd23a"/><stop offset="0.45" stop-color="#ff8a1e"/><stop offset="1" stop-color="#f0323c"/></linearGradient></defs>
<path d="M633.2 700Q634.6 697 636.6 696.8Q636.2 698.2 637.2 699Q638.6 697.6 641 697.6Q642 696 643.6 695.6Q643.4 697.4 645 698.6Q648 701 647.8 705Q647.2 710.6 641.4 711.8Q635 712.4 632.6 707Q631.6 703.4 633.2 700Z" fill="url(#ffg)"/><circle cx="639.4" cy="704.4" r="3.7" fill="#8a3cd2"/><path d="M635.8 703.4Q637.6 700.6 641 701.4Q639.4 702.4 639.8 704Q637.4 705 635.8 703.4Z" fill="#ffb030"/>
<!-- shield -->
<path d="M662.4 697.6Q666 697.4 669.4 695.8Q672.8 697.4 676.4 697.6V703.6Q676 709 669.4 711.4Q662.8 709 662.4 703.6Z" fill="#3a9fe4"/><path d="M669.4 695.8Q672.8 697.4 676.4 697.6V703.6Q676.2 706 675 707.6Q671 704 666.4 699.8Q668 697 669.4 695.8Z" fill="#74ccf6"/><path d="M662.4 697.6Q664.4 697.5 666.4 696.9L664.6 706.6Q662.6 705.4 662.4 703.6Z" fill="#2a84d4"/>
<!-- Ps -->
<rect x="691.8" y="696.6" width="14" height="14" rx="2.4" fill="#0a1c36"/><text x="698.8" y="706.9" font-family="Liberation Sans" font-size="8.8" fill="#3fa9f5" stroke="#3fa9f5" stroke-width="0.25" text-anchor="middle">Ps</text>
<!-- terminal -->
<rect x="720" y="697.4" width="15.6" height="13.6" rx="1.6" fill="#3b3b3b"/><path d="M720 699.2Q720 697.4 721.6 697.4H734Q735.6 697.4 735.6 699.2V699.6H720Z" fill="#b4b4b4"/><path d="M722.6 702.2L726 705L722.6 707.8" stroke="#fff" stroke-width="1.3" fill="none"/><path d="M727.4 708H732" stroke="#fff" stroke-width="1.3"/>
<!-- sticky notes -->
<rect x="750" y="696.8" width="15" height="14.2" rx="0.8" fill="#4a4a4a"/><path d="M756.8 704.2H764.6L756.8 710.8Z" fill="#f8dc2e"/>
<!-- DEV -->
<rect x="779.2" y="696" width="15.4" height="15" rx="1" fill="#16286c"/><rect x="780.2" y="704.2" width="13.4" height="5.8" fill="#2f6fd8"/><text x="786.9" y="703.4" font-family="Liberation Sans" font-weight="bold" font-size="6.8" fill="#fff" text-anchor="middle">DEV</text><path d="M785.6 705.4L782.4 707.2L785.6 709M787.6 705.2L791.6 709.2M791.6 705.2L787.6 709.2" stroke="#7fc0ff" stroke-width="1.1" fill="none"/>
<!-- snipping -->
<rect x="807.6" y="695.8" width="12.4" height="12.2" rx="1.4" fill="#f6f6f6"/><rect x="810.6" y="698.8" width="7.8" height="7.6" fill="#dcdcdc"/><path d="M809.4 697.6H818.6" stroke="#c81e2a" stroke-width="1.3" stroke-dasharray="1.3 1"/><path d="M809.4 699.4V706.6" stroke="#c81e2a" stroke-width="1.3" stroke-dasharray="1.3 1"/><path d="M812.6 702.6L821.6 705.2M813.6 701.4L817.4 709.4" stroke="#62b4f4" stroke-width="0.9"/><circle cx="817.2" cy="710.6" r="1.5" fill="none" stroke="#62b4f4" stroke-width="0.9"/><circle cx="822.6" cy="704.6" r="1.5" fill="none" stroke="#62b4f4" stroke-width="0.9"/>
<!-- running indicators -->
<rect x="579.6" y="715" width="4" height="1.4" rx="0.7" fill="#9aa8c4"/>
<rect x="696" y="715" width="4" height="1.4" rx="0.7" fill="#9aa8c4"/>
<rect x="722" y="714.8" width="11.4" height="1.8" rx="0.9" fill="#5ab8f8"/>
<rect x="755" y="715" width="4" height="1.4" rx="0.7" fill="#9aa8c4"/>
<rect x="784" y="715" width="4" height="1.4" rx="0.7" fill="#9aa8c4"/>
<rect x="813.4" y="715" width="4" height="1.4" rx="0.7" fill="#9aa8c4"/>
<!-- tray -->
<path d="M1118.4 705.8L1122 702.2L1125.6 705.8" stroke="#fff" stroke-width="1.1" fill="none"/>
<path d="M1138.2 702.6Q1139.6 698.6 1143.6 699.2M1146.8 705.6Q1145 709.6 1141 708.6" stroke="#0c2a5e" stroke-width="1.6" fill="none"/><path d="M1143.4 697.6L1146 699.6L1143 701.2Z" fill="#0c2a5e"/><path d="M1141.4 710.4L1138.8 708.4L1141.8 706.8Z" fill="#0c2a5e"/><rect x="1143.8" y="704.2" width="4" height="4" transform="rotate(45 1145.8 706.2)" fill="#3f9bf0"/>
<rect x="1162.4" y="698" width="4" height="7.4" rx="2" fill="none" stroke="#cfe4ff" stroke-width="0.9"/><path d="M1160.6 703.6Q1160.8 707.4 1164.4 707.4Q1168 707.4 1168.2 703.6M1164.4 707.4V709.6" stroke="#cfe4ff" stroke-width="0.9" fill="none"/>
<g stroke="#fff" fill="none" stroke-width="1"><path d="M1180.4 701.8Q1185.8 697 1191.2 701.8"/><path d="M1182.2 704Q1185.8 700.8 1189.4 704"/><path d="M1184 706.2Q1185.8 704.6 1187.6 706.2"/></g><circle cx="1185.8" cy="708" r="0.9" fill="#fff"/>
<path d="M1196.2 702.4H1198.2L1201 699.8V708.6L1198.2 706H1196.2Z" fill="none" stroke="#fff" stroke-width="0.9"/><path d="M1202.8 701.8Q1204.2 704.2 1202.8 706.6M1204.6 700.2Q1207 704.2 1204.6 708.2" stroke="#fff" stroke-width="0.9" fill="none"/>
<rect x="1213.2" y="701.6" width="8.6" height="5.8" rx="1.2" fill="none" stroke="#fff" stroke-width="0.9"/><rect x="1222" y="703.4" width="1.2" height="2.4" fill="#fff"/><path d="M1212 703.4Q1212 699 1216 698.6Q1216.6 702.6 1212 703.4Z" fill="#fff"/>
</svg>
<div class="t" style="left:1206px;width:60px;text-align:right;top:694.4px;font-size:8.3px;transform-origin:100% 0;color:#fff">1:28 AM</div>
<div class="t" style="left:1206px;width:60px;text-align:right;top:704.6px;font-size:8.3px;transform-origin:100% 0;color:#fff">3/1/2026</div>
<div class="abs" style="left:1279px;top:0;width:1px;height:688.2px;background:#262626"></div>
<div class="abs" style="left:1279px;top:688.2px;width:1px;height:31.8px;background:#0a2a66"></div>
</div></body></html>
